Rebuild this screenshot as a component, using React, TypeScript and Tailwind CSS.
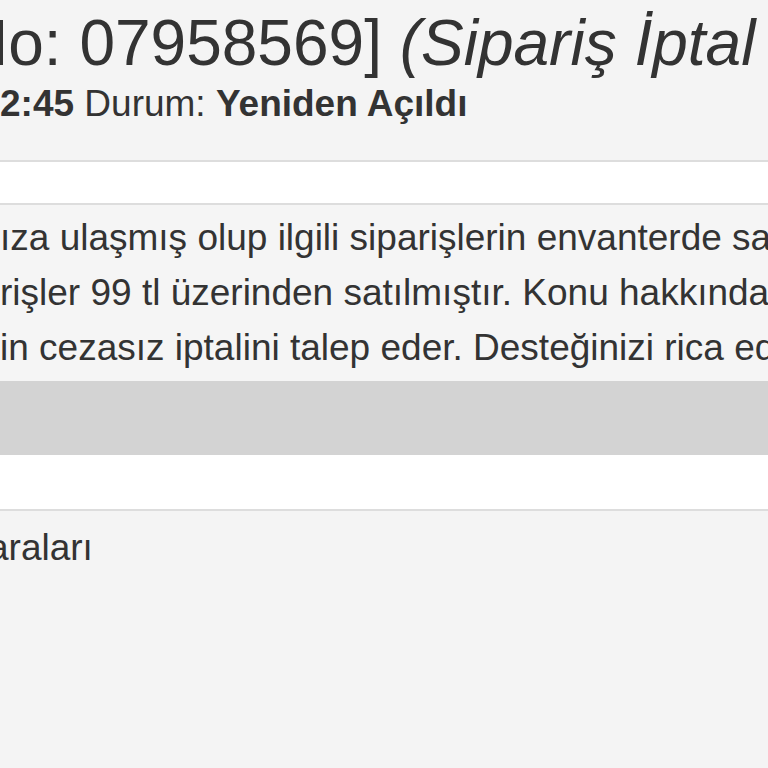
export default function App() {
  return (
    <div className="w-[768px] h-[768px] overflow-hidden bg-[#f4f4f4] text-[#333] font-['Liberation_Sans',Arial,sans-serif]">
      {/* Ticket header */}
      <div className="h-[160px] overflow-hidden whitespace-nowrap">
        <h1 className="pt-[8px] text-[64px] leading-[70px] font-normal -ml-[38px]">
          No: 07958569] <span className="italic">(Sipariş İptal Talebi)</span>
        </h1>
        <div className="mt-[5px] text-[37px] leading-[42px]">
          <b>2:45</b> Durum: <b>Yeniden Açıldı</b>
        </div>
      </div>

      <div className="h-[45px] bg-white border-y-2 border-[#dddddd]" />

      {/* Message body */}
      <div className="h-[176px] pt-[5px] bg-[#f5f5f5] text-[37px] leading-[55px] whitespace-nowrap overflow-hidden">
        <div>ıza ulaşmış olup ilgili siparişlerin envanterde satış fiyatı</div>
        <div>rişler 99 tl üzerinden satılmıştır. Konu hakkında mağazamız</div>
        <div>in cezasız iptalini talep eder. Desteğinizi rica ederiz.</div>
      </div>

      <div className="h-[74px] bg-[#d3d3d3]" />

      <div className="h-[56px] bg-white border-b-2 border-[#dddddd]" />

      <div className="pt-[10px] text-[37px] leading-[54px] whitespace-nowrap -ml-[12px]">
        araları
      </div>
    </div>
  );
}
